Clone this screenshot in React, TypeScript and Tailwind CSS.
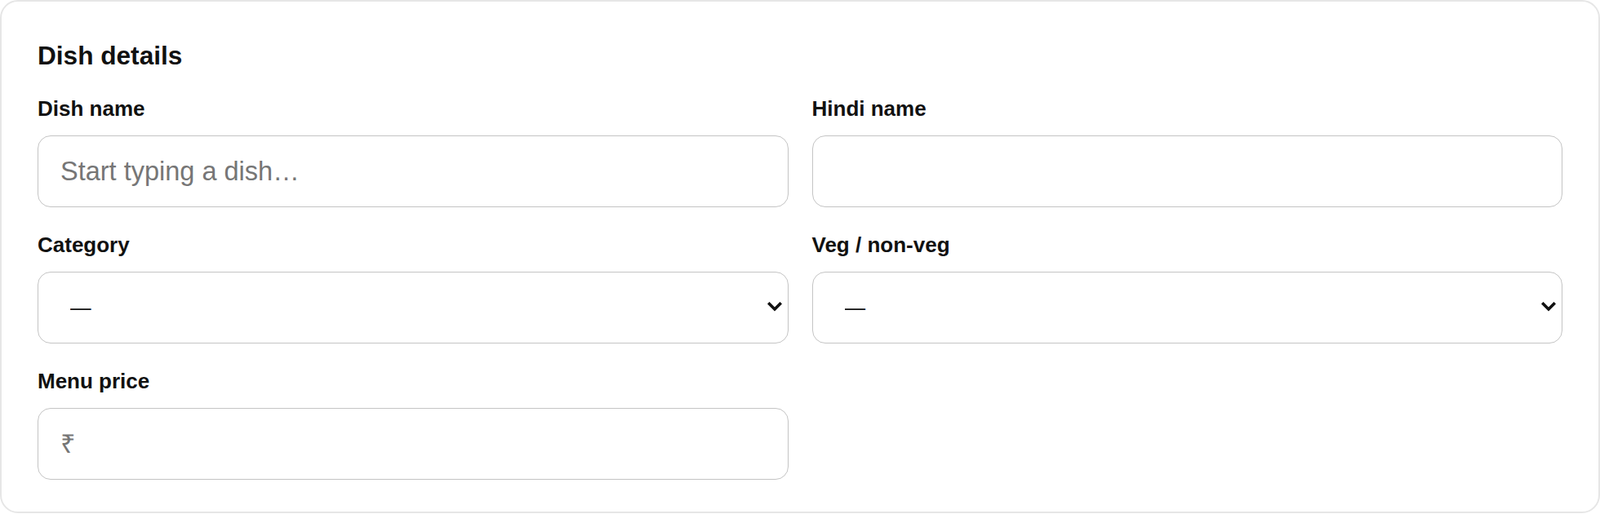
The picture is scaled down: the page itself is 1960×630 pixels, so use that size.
import React from 'react';

const font = { fontFamily: '"Liberation Sans", "Noto Sans", Arial, sans-serif' };

const Label: React.FC<{ children: React.ReactNode }> = ({ children }) => (
  <label className="block mb-[17px] text-[26px] leading-[32px] font-bold text-[#111111]">
    {children}
  </label>
);

const TextField: React.FC<{ label: string; placeholder?: string }> = ({ label, placeholder }) => (
  <div>
    <Label>{label}</Label>
    <input
      type="text"
      placeholder={placeholder}
      className="block w-full h-[88px] px-[27px] rounded-[16px] border border-[#c4c4c4] bg-white text-[32.5px] text-[#111111] placeholder-[#767676] outline-none"
      style={font}
    />
  </div>
);

const SelectField: React.FC<{ label: string; options: string[] }> = ({ label, options }) => (
  <div>
    <Label>{label}</Label>
    <div className="relative">
      <select
        defaultValue="—"
        className="block w-full h-[88px] pl-[39px] pr-[40px] rounded-[16px] border border-[#c4c4c4] bg-white text-[25.6px] font-medium text-[#111111] appearance-none outline-none"
        style={font}
      >
        <option value="—">—</option>
        {options.map((o) => (
          <option key={o} value={o}>
            {o}
          </option>
        ))}
      </select>
      {/* chevron */}
      <svg
        className="pointer-events-none absolute right-[8px] top-[37px]"
        width="18"
        height="13"
        viewBox="0 0 18 13"
        fill="none"
      >
        <path d="M2.5 2.5 L9 9 L15.5 2.5" stroke="#111111" strokeWidth="3.6" strokeLinecap="square" />
      </svg>
    </div>
  </div>
);

export default function App() {
  return (
    <div className="min-h-screen bg-white" style={font}>
      <div className="bg-white border-2 border-[#e6e6e6] rounded-[22px] pt-[46px] px-[44px] pb-[39px]">
        <h2 className="text-[31.6px] leading-[40px] font-bold text-[#111111]">Dish details</h2>

        <div className="mt-[29px] grid grid-cols-2 gap-x-[29px] gap-y-[30px]">
          <TextField label="Dish name" placeholder="Start typing a dish…" />
          <TextField label="Hindi name" />
          <SelectField label="Category" options={['Starter', 'Main course', 'Bread', 'Rice', 'Dessert', 'Beverage']} />
          <SelectField label="Veg / non-veg" options={['Veg', 'Non-veg', 'Egg']} />
          <TextField label="Menu price" placeholder="₹" />
        </div>
      </div>
    </div>
  );
}
